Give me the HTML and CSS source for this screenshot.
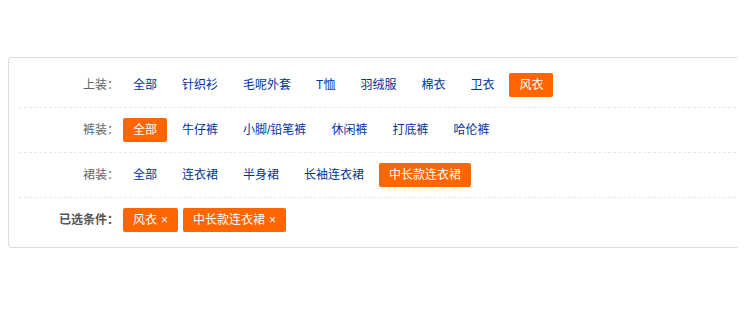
FILE: index.html
```html
<!DOCTYPE html>
<html>
<head>
<meta charset="utf-8">
<title>筛选</title>
<link rel="stylesheet" href="styles.css">
</head>
<body>

<div class="filter">

  <div class="row">
    <span class="label">上装：</span>
    <ul class="items">
      <li><a href="#">全部</a></li>
      <li><a href="#">针织衫</a></li>
      <li><a href="#">毛呢外套</a></li>
      <li><a href="#">T恤</a></li>
      <li><a href="#">羽绒服</a></li>
      <li><a href="#">棉衣</a></li>
      <li><a href="#">卫衣</a></li>
      <li class="on"><a href="#">风衣</a></li>
    </ul>
  </div>

  <div class="row">
    <span class="label">裤装：</span>
    <ul class="items">
      <li class="on"><a href="#">全部</a></li>
      <li><a href="#">牛仔裤</a></li>
      <li><a href="#">小脚/铅笔裤</a></li>
      <li><a href="#">休闲裤</a></li>
      <li><a href="#">打底裤</a></li>
      <li><a href="#">哈伦裤</a></li>
    </ul>
  </div>

  <div class="row">
    <span class="label">裙装：</span>
    <ul class="items">
      <li><a href="#">全部</a></li>
      <li><a href="#">连衣裙</a></li>
      <li><a href="#">半身裙</a></li>
      <li><a href="#">长袖连衣裙</a></li>
      <li class="on"><a href="#">中长款连衣裙</a></li>
    </ul>
  </div>

  <div class="row picked">
    <span class="label">已选条件：</span>
    <ul class="items">
      <li class="on"><a href="#">风衣<i class="close">×</i></a></li>
      <li class="on"><a href="#">中长款连衣裙<i class="close">×</i></a></li>
    </ul>
  </div>

</div>

</body>
</html>
```

FILE: styles.css
```css
body { margin: 8px; background: #fff;
  font: 12px "Liberation Sans", "Noto Sans CJK SC", sans-serif; }

/* box runs on past the right edge of the window */
.filter { margin: 49px -8px 0 0; padding: 5px 0;
  border: 1px solid #ddd; border-right: none; border-radius: 4px 0 0 4px; }

.row { display: flex; align-items: center; margin: 0 0 0 10px; padding: 10px 0;
  border-bottom: 1px dashed #e8e8e8; }
.row.picked { border-bottom: none; }

.label { width: 100px; text-align: right; color: #666; line-height: 24px; }
.picked .label { font-weight: bold; color: #555; }

.items { display: flex; list-style: none; margin: 0; padding: 0 0 0 4px; }
.items li { margin-right: 5px; }
.items a { display: block; height: 24px; line-height: 24px; padding: 0 10px;
  color: #039; text-decoration: none; border-radius: 2px; }
.items a:hover { color: #f60; }

.items li.on a { background: #f60; color: #fff; }

.close { font-style: normal; margin-left: 4px; font-size: 12px; }
```
